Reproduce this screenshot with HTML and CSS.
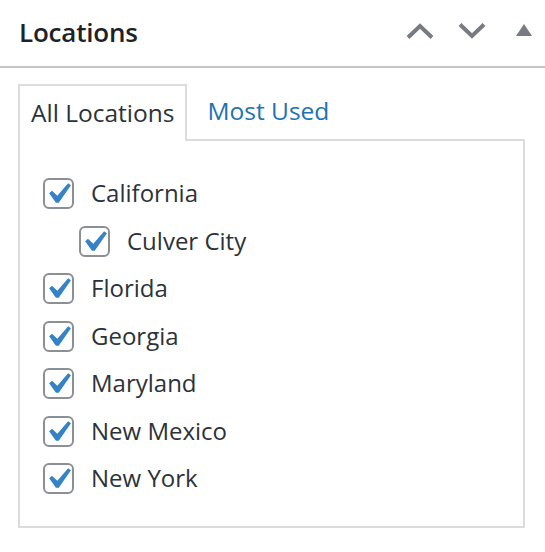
FILE: index.html
```html
<!DOCTYPE html>
<html>
<head>
<meta charset="utf-8">
<link rel="stylesheet" href="styles.css">
</head>
<body>
<div class="box">
  <div class="header">
    <h2 class="title">Locations</h2>
    <div class="actions">
      <svg class="icon" width="28" height="16" viewBox="0 0 28 16"><path d="M2 14.5 L14 3 L26 14.5" fill="none" stroke="#787c82" stroke-width="4"/></svg>
      <svg class="icon" width="28" height="16" viewBox="0 0 28 16"><path d="M2 1.5 L14 13 L26 1.5" fill="none" stroke="#787c82" stroke-width="4"/></svg>
      <svg class="icon tri" width="16" height="12" viewBox="0 0 16 12"><path d="M8 0 L16 12 L0 12 Z" fill="#787c82"/></svg>
    </div>
  </div>
  <div class="inside">
    <ul class="tabs">
      <li class="tab active">All Locations</li>
      <li class="tab link">Most Used</li>
    </ul>
    <div class="panel">
      <ul class="checklist">
        <li class="row"><span class="cb"><svg viewBox="0 0 20 20"><path d="M14.83 4.89l1.34.94-5.81 8.38H9.02L5.78 9.67l1.34-1.25 2.57 2.4z" fill="#3582c4"/></svg></span><span class="label">California</span></li>
        <li class="row child"><span class="cb"><svg viewBox="0 0 20 20"><path d="M14.83 4.89l1.34.94-5.81 8.38H9.02L5.78 9.67l1.34-1.25 2.57 2.4z" fill="#3582c4"/></svg></span><span class="label">Culver City</span></li>
        <li class="row"><span class="cb"><svg viewBox="0 0 20 20"><path d="M14.83 4.89l1.34.94-5.81 8.38H9.02L5.78 9.67l1.34-1.25 2.57 2.4z" fill="#3582c4"/></svg></span><span class="label">Florida</span></li>
        <li class="row"><span class="cb"><svg viewBox="0 0 20 20"><path d="M14.83 4.89l1.34.94-5.81 8.38H9.02L5.78 9.67l1.34-1.25 2.57 2.4z" fill="#3582c4"/></svg></span><span class="label">Georgia</span></li>
        <li class="row"><span class="cb"><svg viewBox="0 0 20 20"><path d="M14.83 4.89l1.34.94-5.81 8.38H9.02L5.78 9.67l1.34-1.25 2.57 2.4z" fill="#3582c4"/></svg></span><span class="label">Maryland</span></li>
        <li class="row"><span class="cb"><svg viewBox="0 0 20 20"><path d="M14.83 4.89l1.34.94-5.81 8.38H9.02L5.78 9.67l1.34-1.25 2.57 2.4z" fill="#3582c4"/></svg></span><span class="label">New Mexico</span></li>
        <li class="row"><span class="cb"><svg viewBox="0 0 20 20"><path d="M14.83 4.89l1.34.94-5.81 8.38H9.02L5.78 9.67l1.34-1.25 2.57 2.4z" fill="#3582c4"/></svg></span><span class="label">New York</span></li>
      </ul>
    </div>
  </div>
</div>
</body>
</html>
```
FILE: styles.css
```css
html, body {
  margin: 0;
  padding: 0;
  background: #fff;
}
body {
  font-family: "Open Sans", "Noto Sans", sans-serif;
  color: #2c3338;
  width: 545px;
  height: 552px;
  overflow: hidden;
}
.header {
  height: 66px;
  border-bottom: 2px solid #c3c4c7;
  display: flex;
  align-items: center;
  justify-content: space-between;
  padding: 0 13px 0 19px;
}
.title {
  margin: 0;
  font-size: 26px;
  font-weight: 600;
  color: #1d2327;
  letter-spacing: -0.2px;
  position: relative;
  top: -1px;
}
.actions {
  display: flex;
  align-items: center;
  gap: 24px;
}
.icon {
  display: block;
  position: relative;
  top: -2px;
}
.tri {
  top: -3px;
  margin-left: 6px;
}
.inside {
  padding: 16px 20px 0 18px;
}
.tabs {
  list-style: none;
  margin: 0;
  padding: 0;
  display: flex;
  align-items: flex-end;
  gap: 9px;
  height: 55px;
}
.tab {
  font-size: 24.5px;
  padding: 0 11px 0 11px;
  height: 55px;
  line-height: 53px;
  box-sizing: border-box;
}
.tab.active {
  border: 2px solid #dcdcde;
  border-bottom: none;
  background: #fff;
  height: 57px;
  margin-bottom: -2px;
  position: relative;
  z-index: 1;
  color: #2c3338;
}
.tab.link {
  color: #2271b1;
}
.panel {
  border: 2px solid #dcdcde;
  height: 389px;
  box-sizing: border-box;
  padding: 29px 0 0 23px;
}
.checklist {
  list-style: none;
  margin: 0;
  padding: 0;
}
.row {
  display: flex;
  align-items: center;
  height: 47.5px;
}
.row.child {
  padding-left: 36px;
}
.cb {
  width: 31px;
  height: 31px;
  box-sizing: border-box;
  border: 2px solid #8c8f94;
  border-radius: 6px;
  position: relative;
  flex: none;
}
.cb svg {
  position: absolute;
  width: 42px;
  height: 42px;
  left: -8px;
  top: -7px;
}
.label {
  margin-left: 17px;
  font-size: 24px;
  position: relative;
  top: -1px;
}
```
